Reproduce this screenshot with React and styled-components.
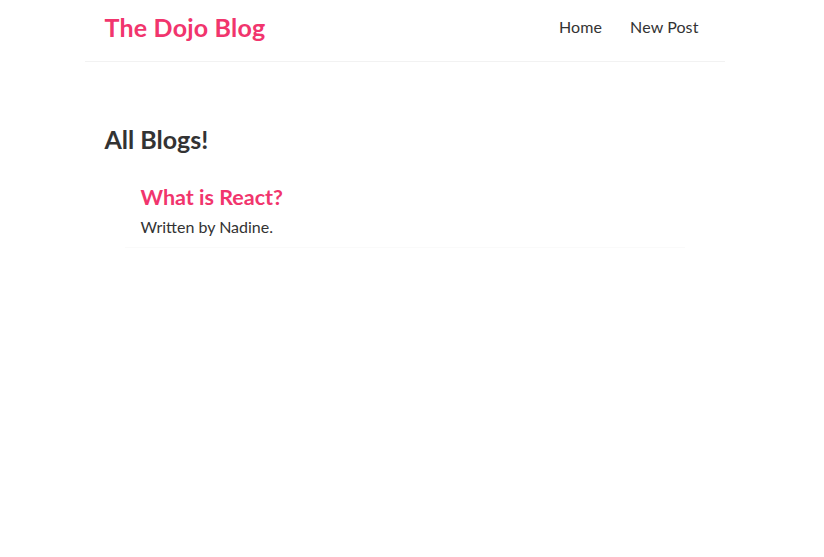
import React from "react";
import styled, { createGlobalStyle } from "styled-components";

const Global = createGlobalStyle`
  * { margin: 0; box-sizing: border-box; }
  body {
    margin: 0;
    background: #fff;
    font-family: "Lato", "Open Sans", sans-serif;
    color: #333;
  }
`;

const Page = styled.div`
  width: 809px;
`;

const Navbar = styled.nav`
  max-width: 640px;
  height: 62px;
  margin: 0 auto;
  padding: 0 20px 8px;
  display: flex;
  align-items: center;
  border-bottom: 1px solid #f2f2f2;
`;

const Logo = styled.h1`
  font-size: 25px;
  font-weight: 700;
  color: #f1356d;
  letter-spacing: 0.2px;
`;

const Links = styled.div`
  margin-left: auto;
  display: flex;
`;

const NavLink = styled.a`
  margin-left: 16px;
  padding: 6px;
  font-size: 16px;
  color: #333;
  text-decoration: none;
  letter-spacing: 0.1px;
`;

const Content = styled.main`
  max-width: 640px;
  margin: 42px auto 40px;
  padding: 20px;
`;

const Title = styled.h2`
  font-size: 25px;
  font-weight: 700;
  line-height: 30px;
  color: #333;
`;

const BlogList = styled.div`
  padding: 0 20px;
`;

const Preview = styled.div`
  padding: 10px 16px;
  margin: 20px 0;
  border-bottom: 1px solid #fafafa;
`;

const PreviewTitle = styled.h2`
  font-size: 21.5px;
  line-height: 26px;
  font-weight: 700;
  color: #f1356d;
  margin-bottom: 7px;
`;

const Author = styled.p`
  font-size: 16px;
  line-height: 20px;
  color: #333;
`;

export default function App() {
  const blogs = [{ id: 1, title: "What is React?", author: "Nadine" }];
  return (
    <Page>
      <Global />
      <Navbar>
        <Logo>The Dojo Blog</Logo>
        <Links>
          <NavLink href="#">Home</NavLink>
          <NavLink href="#">New Post</NavLink>
        </Links>
      </Navbar>
      <Content>
        <Title>All Blogs!</Title>
        <BlogList>
          {blogs.map((b) => (
            <Preview key={b.id}>
              <PreviewTitle>{b.title}</PreviewTitle>
              <Author>Written by {b.author}.</Author>
            </Preview>
          ))}
        </BlogList>
      </Content>
    </Page>
  );
}
